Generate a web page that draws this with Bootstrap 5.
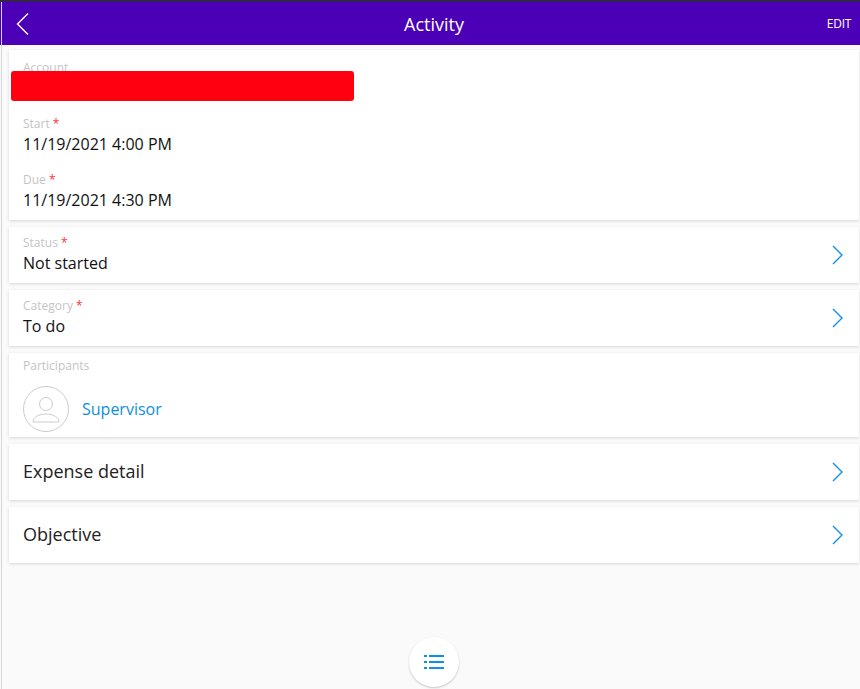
<!DOCTYPE html>
<html lang="en">
<head>
<meta charset="utf-8">
<title>Activity</title>
<link href="https://cdn.jsdelivr.net/npm/bootstrap@5.3.0/dist/css/bootstrap.min.css" rel="stylesheet">
<style>
html,body{height:100%;}
body{font-family:"Open Sans",sans-serif;background:#fafafa;color:#111;overflow:hidden;}
.app-shell{position:relative;height:689px;width:860px;}
.app-head{height:45px;background:linear-gradient(90deg,#4b00b8 1px,#d9d2ee 1px,#d9d2ee 2px,#4b00b8 2px);border-top:2px solid #33264a;color:#fff;}
.app-head h1{font-size:18px;font-weight:400;margin:0;line-height:1;}
.head-left{width:68px;}
.head-right{width:60px;}
.edit-btn{font-size:12px;letter-spacing:-.3px;padding-right:9px;}
.back-ic{margin-left:16px;}
.stack{flex:1 1 auto;margin-left:1px;border-left:1px solid #d6d6d6;padding:5px 1px 0 7px;gap:7px;}
.tile{background:#fff;box-shadow:0 1px 3px rgba(0,0,0,.14);padding-left:14px;padding-right:16px;}
.tile-main{height:170px;padding-top:10px;position:relative;}
.fld{height:56px;}
.fld-tile{height:56px;}
.lbl{font-size:12px;line-height:16px;color:#c4c4c4;height:16px;}
.req{color:#f33;}
.val{font-size:16px;line-height:20px;color:#111;margin-top:2px;}
.fld-tile .info{margin-top:-2px;}
.redact{position:absolute;left:2px;top:21px;width:343px;height:30px;background:#ff0010;border-radius:3px;}
.tile-part{height:84px;}
.part-head{font-size:12px;line-height:16px;color:#c4c4c4;height:29px;padding-top:5px;border-bottom:1px solid #fcfcfc;margin:0 -16px 0 -14px;padding-left:14px;}
.avatar{width:46px;height:46px;border:1px solid #ccc;border-radius:50%;}
.part-link{color:#0d90e0;font-size:16px;margin-left:13px;text-decoration:none;}
.nav-tile{height:56px;font-size:18px;color:#222;}
.nav-tile span{margin-top:-1px;}
.fab{position:absolute;left:409px;bottom:2px;width:50px;height:50px;background:#fff;border-radius:50%;box-shadow:0 1px 2px rgba(0,0,0,.22);}
</style>
</head>
<body>
<div class="app-shell d-flex flex-column">
  <header class="app-head d-flex align-items-center justify-content-between">
    <div class="head-left">
      <svg class="back-ic d-block" width="13" height="24" viewBox="0 0 13 24" fill="none" stroke="#fff" stroke-width="1.4"><path d="M12 1.5 1.5 12 12 22.5"/></svg>
    </div>
    <h1>Activity</h1>
    <div class="head-right text-end edit-btn">EDIT</div>
  </header>
  <main class="stack d-flex flex-column">
    <section class="tile tile-main">
      <div class="fld"><div class="lbl">Account</div></div>
      <div class="redact"></div>
      <div class="fld"><div class="lbl">Start <span class="req">*</span></div><div class="val">11/19/2021 4:00 PM</div></div>
      <div class="fld"><div class="lbl">Due <span class="req">*</span></div><div class="val">11/19/2021 4:30 PM</div></div>
    </section>
    <section class="tile fld-tile d-flex align-items-center justify-content-between">
      <div class="info"><div class="lbl">Status <span class="req">*</span></div><div class="val">Not started</div></div>
      <svg width="11" height="20" viewBox="0 0 11 20" fill="none" stroke="#0d90e8" stroke-width="1.4"><path d="M1 1l9 9-9 9"/></svg>
    </section>
    <section class="tile fld-tile d-flex align-items-center justify-content-between">
      <div class="info"><div class="lbl">Category <span class="req">*</span></div><div class="val">To do</div></div>
      <svg width="11" height="20" viewBox="0 0 11 20" fill="none" stroke="#0d90e8" stroke-width="1.4"><path d="M1 1l9 9-9 9"/></svg>
    </section>
    <section class="tile tile-part">
      <div class="part-head">Participants</div>
      <div class="d-flex align-items-center pt-1">
        <div class="avatar d-flex align-items-center justify-content-center">
          <svg width="30" height="30" viewBox="0 0 30 30" fill="none" stroke="#ccc" stroke-width="1"><circle cx="15" cy="10" r="6.5"/><path d="M2 28c0-5 6-8 13-8s13 3 13 8z"/></svg>
        </div>
        <a class="part-link" href="#">Supervisor</a>
      </div>
    </section>
    <section class="tile nav-tile d-flex align-items-center justify-content-between">
      <span>Expense detail</span>
      <svg width="11" height="20" viewBox="0 0 11 20" fill="none" stroke="#0d90e8" stroke-width="1.4"><path d="M1 1l9 9-9 9"/></svg>
    </section>
    <section class="tile nav-tile d-flex align-items-center justify-content-between">
      <span>Objective</span>
      <svg width="11" height="20" viewBox="0 0 11 20" fill="none" stroke="#0d90e8" stroke-width="1.4"><path d="M1 1l9 9-9 9"/></svg>
    </section>
  </main>
  <div class="fab d-flex align-items-center justify-content-center">
    <svg width="20" height="14" viewBox="0 0 20 14" fill="#0d90e8"><rect x="0" y="0" width="3" height="2"/><rect x="5" y="0" width="15" height="2"/><rect x="0" y="6" width="3" height="2"/><rect x="5" y="6" width="15" height="2"/><rect x="0" y="12" width="3" height="2"/><rect x="5" y="12" width="15" height="2"/></svg>
  </div>
</div>
<script src="https://cdn.jsdelivr.net/npm/bootstrap@5.3.0/dist/js/bootstrap.bundle.min.js"></script>
</body>
</html>
